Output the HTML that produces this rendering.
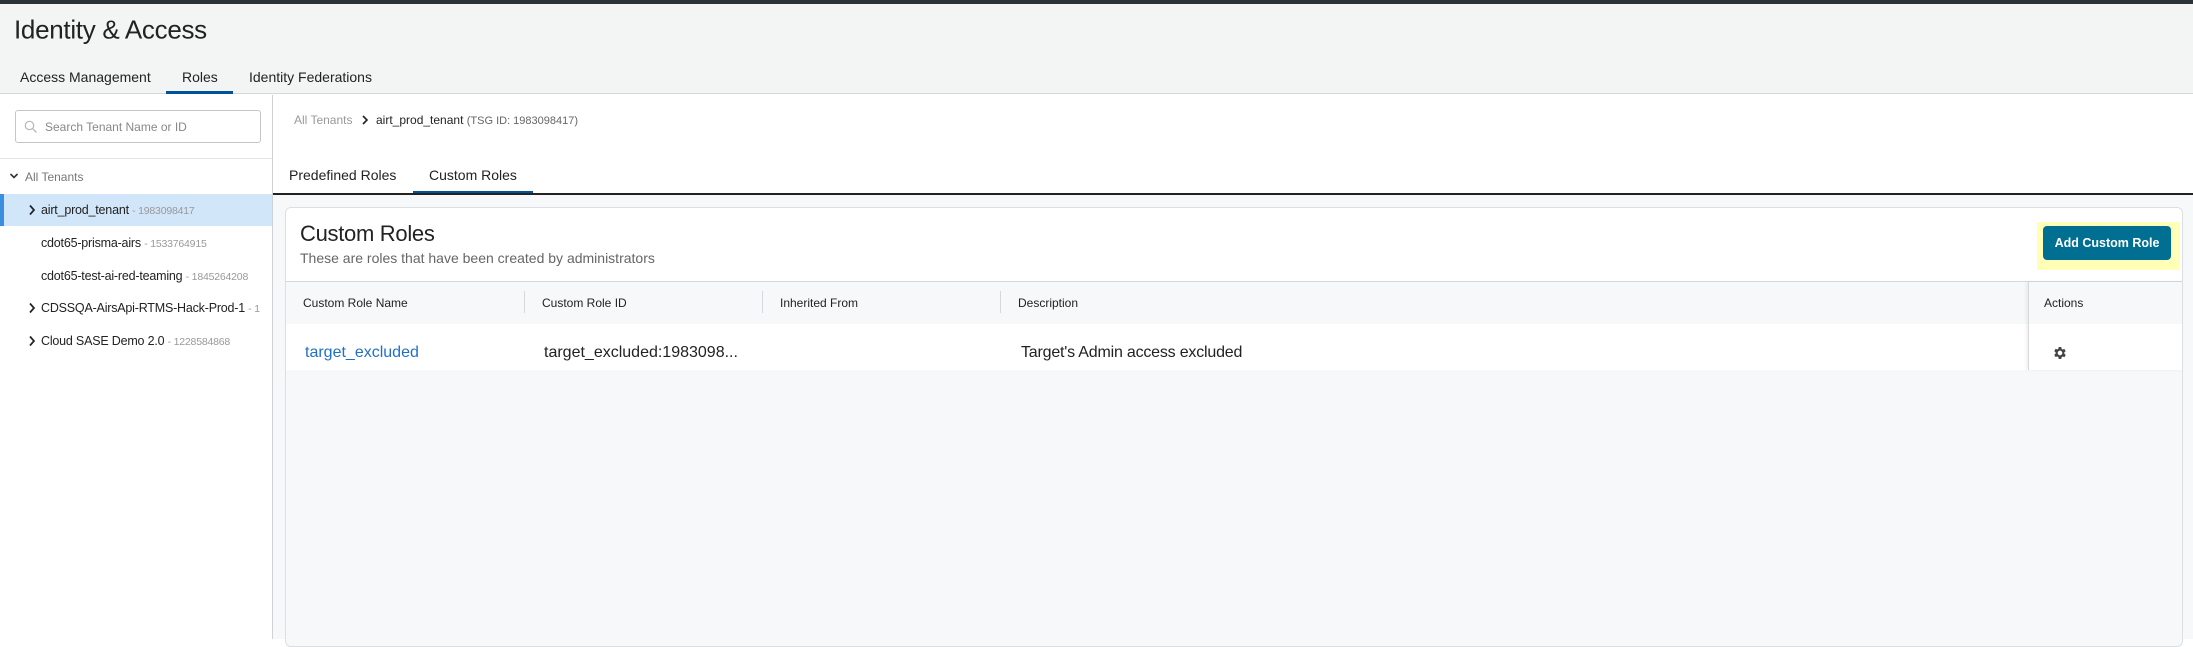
<!DOCTYPE html>
<html><head><meta charset="utf-8"><style>
*{box-sizing:border-box;margin:0;padding:0}
body{width:2193px;height:639px;overflow:hidden;font-family:"Liberation Sans",sans-serif;color:#222;background:#fff;position:relative}
.a{position:absolute;white-space:nowrap}
.vc{transform:translateY(-50%)}
</style></head><body>
<div class="a" style="left:0;top:0;width:2193px;height:4px;background:#2b3238"></div>
<div class="a" style="left:0;top:4px;width:2193px;height:90px;background:#f3f5f5;border-bottom:1px solid #d6d9dc"></div>
<div class="a vc" style="left:14px;top:30px;font-size:26px;color:#222;letter-spacing:-0.3px">Identity &amp; Access</div>
<div class="a vc" style="left:20px;top:77px;font-size:14px">Access Management</div>
<div class="a vc" style="left:182px;top:77px;font-size:14px">Roles</div>
<div class="a vc" style="left:249px;top:77px;font-size:14px">Identity Federations</div>
<div class="a" style="left:166px;top:91px;width:67px;height:3px;background:#00539b"></div>

<!-- sidebar -->
<div class="a" style="left:272px;top:95px;width:1px;height:544px;background:#cfd3d6"></div>
<div class="a" style="left:15px;top:110px;width:246px;height:33px;border:1px solid #c3c7ca;border-radius:3px;background:#fff"></div>
<svg class="a" style="left:24px;top:120px" width="14" height="14" viewBox="0 0 14 14"><circle cx="5.5" cy="5.5" r="4.2" fill="none" stroke="#b5b9bc" stroke-width="1.2"/><path d="M8.6 8.6L12.5 12.5" stroke="#b5b9bc" stroke-width="1.3"/></svg>
<div class="a vc" style="left:45px;top:127px;font-size:12px;color:#888">Search Tenant Name or ID</div>
<div class="a" style="left:0;top:158px;width:272px;height:1px;background:#e3e5e7"></div>
<svg class="a" style="left:9px;top:171px" width="10" height="10" viewBox="0 0 10 10"><path d="M1.5 3L5 6.5 8.5 3" fill="none" stroke="#333" stroke-width="1.6"/></svg>
<div class="a vc" style="left:25px;top:177px;font-size:12px;color:#777">All Tenants</div>
<div class="a" style="left:0;top:194px;width:272px;height:32px;background:#d1e6f9;border-left:4px solid #3a8fe0"></div>
<svg class="a" style="left:27px;top:204px" width="10" height="12" viewBox="0 0 10 12"><path d="M3 1.5L7 6 3 10.5" fill="none" stroke="#222" stroke-width="1.7"/></svg>
<div class="a vc" style="left:41px;top:210px;font-size:12.5px;letter-spacing:-0.2px">airt_prod_tenant <span style="font-size:10.5px;color:#999">- 1983098417</span></div>
<div class="a vc" style="left:41px;top:243px;font-size:12.5px;letter-spacing:-0.2px">cdot65-prisma-airs <span style="font-size:10.5px;color:#999">- 1533764915</span></div>
<div class="a vc" style="left:41px;top:276px;font-size:12.5px;letter-spacing:-0.2px">cdot65-test-ai-red-teaming <span style="font-size:10.5px;color:#999">- 1845264208</span></div>
<svg class="a" style="left:27px;top:302px" width="10" height="12" viewBox="0 0 10 12"><path d="M3 1.5L7 6 3 10.5" fill="none" stroke="#222" stroke-width="1.7"/></svg>
<div class="a vc" style="left:41px;top:308px;font-size:12.5px;letter-spacing:-0.2px">CDSSQA-AirsApi-RTMS-Hack-Prod-1 <span style="font-size:10.5px;color:#999">- 1</span></div>
<svg class="a" style="left:27px;top:335px" width="10" height="12" viewBox="0 0 10 12"><path d="M3 1.5L7 6 3 10.5" fill="none" stroke="#222" stroke-width="1.7"/></svg>
<div class="a vc" style="left:41px;top:341px;font-size:12.5px;letter-spacing:-0.2px">Cloud SASE Demo 2.0 <span style="font-size:10.5px;color:#999">- 1228584868</span></div>

<!-- main -->
<div class="a vc" style="left:294px;top:120px;font-size:12px;color:#999">All Tenants</div>
<svg class="a" style="left:361px;top:114px" width="8" height="12" viewBox="0 0 8 12"><path d="M2 2L6 6 2 10" fill="none" stroke="#222" stroke-width="1.6"/></svg>
<div class="a vc" style="left:376px;top:120px;font-size:12px;color:#222">airt_prod_tenant <span style="font-size:11px;color:#666">(TSG ID: 1983098417)</span></div>
<div class="a vc" style="left:289px;top:175px;font-size:14px">Predefined Roles</div>
<div class="a vc" style="left:429px;top:175px;font-size:14px">Custom Roles</div>
<div class="a" style="left:413px;top:191px;width:120px;height:3px;background:#00539b"></div>
<div class="a" style="left:273px;top:193px;width:1920px;height:2px;background:#222"></div>
<div class="a" style="left:273px;top:195px;width:1920px;height:444px;background:#f7f8f9"></div>

<!-- card -->
<div class="a" style="left:285px;top:207px;width:1898px;height:440px;background:#f7f8fa;border:1px solid #dcdfe2;border-radius:6px;overflow:hidden">
  <div class="a" style="left:0;top:0;width:1898px;height:74px;background:#fff;border-bottom:1px solid #d6d9dc"></div>
  <div class="a vc" style="left:14px;top:26px;font-size:22px;color:#222;letter-spacing:-0.3px">Custom Roles</div>
  <div class="a vc" style="left:14px;top:50px;font-size:14px;color:#666">These are roles that have been created by administrators</div>
  <div class="a" style="left:1751px;top:14px;width:143px;height:48px;background:#ffffb8"></div>
  <div class="a" style="left:1757px;top:18px;width:128px;height:34px;background:#006f92;border-radius:4px;color:#fff;font-size:12.5px;font-weight:bold;text-align:center;line-height:34px">Add Custom Role</div>
  <div class="a vc" style="left:17px;top:95px;font-size:12px">Custom Role Name</div>
  <div class="a" style="left:238px;top:83px;width:1px;height:22px;background:#d6d9dc"></div>
  <div class="a vc" style="left:256px;top:95px;font-size:12px">Custom Role ID</div>
  <div class="a" style="left:476px;top:83px;width:1px;height:22px;background:#d6d9dc"></div>
  <div class="a vc" style="left:494px;top:95px;font-size:12px">Inherited From</div>
  <div class="a" style="left:714px;top:83px;width:1px;height:22px;background:#d6d9dc"></div>
  <div class="a vc" style="left:732px;top:95px;font-size:12px">Description</div>
  <div class="a" style="left:0;top:116px;width:1898px;height:46px;background:#fff"></div>
  <div class="a vc" style="left:19px;top:145px;font-size:16px;color:#1f70c9">target_excluded</div>
  <div class="a vc" style="left:258px;top:145px;font-size:16px">target_excluded:1983098...</div>
  <div class="a vc" style="left:735px;top:145px;font-size:16px;letter-spacing:-0.2px">Target's Admin access excluded</div>
  <div class="a" style="left:1742px;top:74px;width:156px;height:88px;border-left:1px solid #d6d9dc;box-shadow:-2px 0 3px rgba(0,0,0,0.06)"></div>
  <div class="a" style="left:1743px;top:116px;width:155px;height:46px;background:#fff"></div>
  <div class="a vc" style="left:1758px;top:95px;font-size:12px">Actions</div>
  <svg class="a" style="left:1766px;top:137px" width="16" height="16" viewBox="0 0 24 24"><path fill="#444" d="M19.4 13a7.5 7.5 0 000-2l2.1-1.6-2-3.5-2.5 1a7.6 7.6 0 00-1.7-1L15 3h-4l-.4 2.7a7.6 7.6 0 00-1.7 1l-2.5-1-2 3.5L6.5 11a7.5 7.5 0 000 2l-2.1 1.6 2 3.5 2.5-1a7.6 7.6 0 001.7 1L11 21h4l.4-2.7a7.6 7.6 0 001.7-1l2.5 1 2-3.5zM13 15.5a3.5 3.5 0 110-7 3.5 3.5 0 010 7z" transform="translate(-1 0)"/></svg>
</div>
</body></html>
